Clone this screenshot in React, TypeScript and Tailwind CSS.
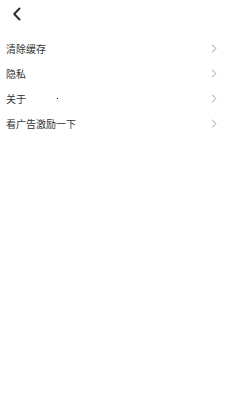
import React from 'react';

const items = ['清除缓存', '隐私', '关于', '看广告激励一下'];

const Chevron: React.FC = () => (
  <svg width="6" height="9" viewBox="0 0 6 9" fill="none" className="shrink-0">
    <path d="M1.4 1 L4.8 4.5 L1.4 8" stroke="#9a9a9a" strokeWidth="1" strokeLinecap="round" strokeLinejoin="round" />
  </svg>
);

export default function App() {
  return (
    <div
      className="w-[225px] h-[400px] bg-white text-[#333]"
      style={{ fontFamily: '"Noto Sans CJK SC", "Noto Sans", sans-serif' }}
    >
      <div className="h-[36px] flex items-start pt-[7px] pl-[12px]">
        <svg width="10" height="14" viewBox="0 0 10 14" fill="none">
          <path d="M7.5 1.5 L2.2 7 L7.5 12.5" stroke="#2b2b2b" strokeWidth="1.9" strokeLinecap="round" strokeLinejoin="round" />
        </svg>
      </div>
      <div className="flex flex-col">
        {items.map((label) => (
          <div key={label} className="h-[25px] flex items-center justify-between pl-[6px] pr-[8px]">
            <span className="text-[10px] leading-none relative">
              {label}
              {label === '关于' && (
                <span className="absolute left-[51px] top-[4px] w-[1px] h-[1px] bg-black" />
              )}
            </span>
            <Chevron />
          </div>
        ))}
      </div>
    </div>
  );
}
